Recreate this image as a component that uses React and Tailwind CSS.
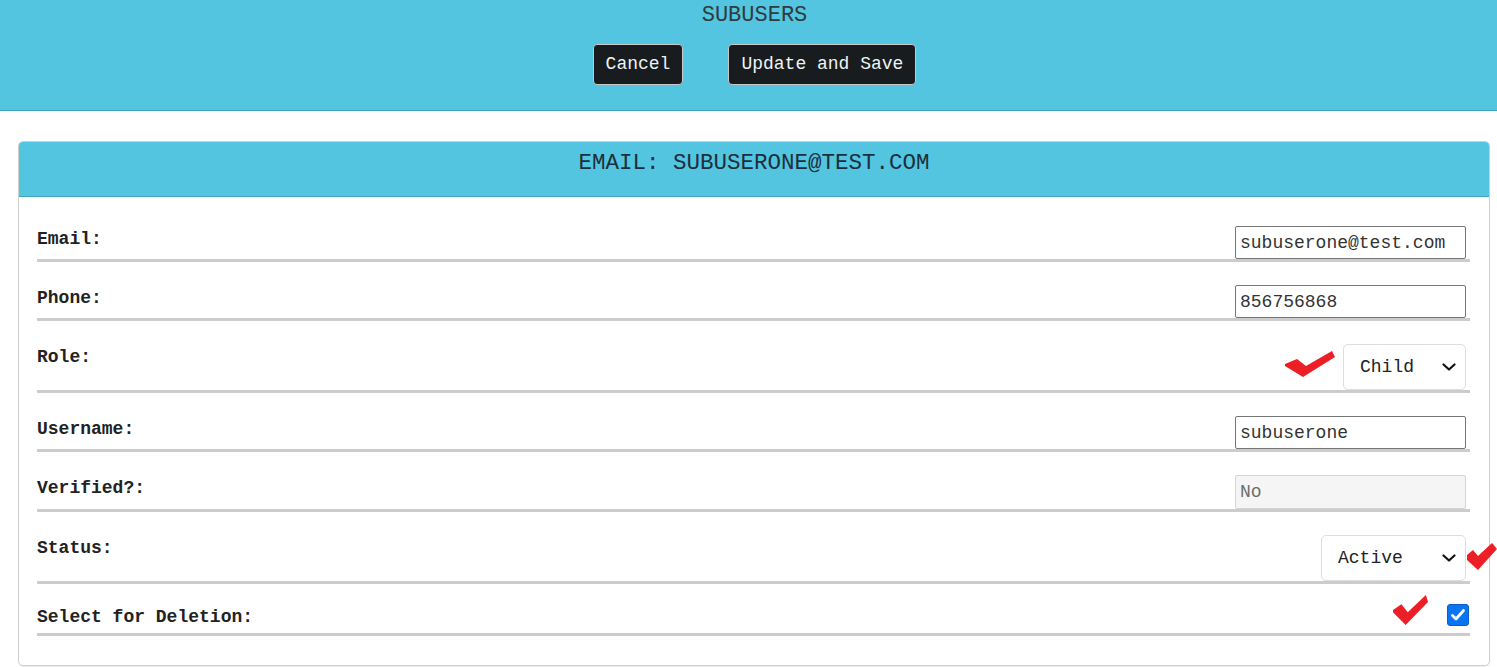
import React from "react";

const Check = ({ className }) => (
  <svg viewBox="0 0 50 26" className={className} preserveAspectRatio="none">
    <polygon points="0,13 12,8 21,15 47,0 50,6 18,26 0,15" fill="#ec1f27" />
  </svg>
);

const SmallCheck = ({ className }) => (
  <svg viewBox="0 0 30 27" className={className} preserveAspectRatio="none">
    <polygon points="0,12 6,7 11,13 25,0 30,6 11,27 0,17" fill="#ec1f27" />
  </svg>
);

const Chevron = () => (
  <svg width="14" height="8" viewBox="0 0 14 8" className="ml-auto">
    <path d="M1.5 1.5 L7 6.5 L12.5 1.5" fill="none" stroke="#111" strokeWidth="2.2" strokeLinecap="round" strokeLinejoin="round" />
  </svg>
);

const Label = ({ children }) => (
  <div className="font-bold text-[18px] leading-[26px] text-[#222]">{children}</div>
);

const Row = ({ label, children, mt = "mt-[23px]" }) => (
  <div className={`flex items-start justify-between border-b-[3px] border-[#cccccc] ${mt}`}>
    <Label>{label}</Label>
    {children}
  </div>
);

const TextInput = ({ value, disabled }) => (
  <input
    defaultValue={value}
    disabled={disabled}
    className={
      disabled
        ? "mr-[4px] w-[231px] h-[34px] px-[4px] text-[18px] border border-[#d4d4d4] bg-[#f5f5f5] text-[#6d6d6d] rounded-[2px] outline-none"
        : "mr-[4px] w-[231px] h-[33px] px-[4px] text-[18px] border border-[#767676] bg-white text-[#333] rounded-[2px] outline-none"
    }
  />
);

const Select = ({ value, w }) => (
  <div className={`${w} h-[46px] flex items-center pl-[16px] pr-[9px] border border-[#dddddd] rounded-[5px] bg-white text-[18px] text-[#222]`}>
    <span>{value}</span>
    <Chevron />
  </div>
);

export default function App() {
  return (
    <div className="w-[1497px] h-[667px] overflow-hidden bg-white font-['Liberation_Mono',monospace]">
      <div className="bg-[#53c5e0] border-b border-[#3ea7c1] h-[111px] flex flex-col items-center pl-[12px]">
        <div className="text-[22px] leading-[32px] text-[#2f3b40]">SUBUSERS</div>
        <div className="flex gap-[45px] mt-[12px]">
          <button className="h-[41px] px-[12px] bg-[#181c1e] border border-[#c8c8c8] rounded-[4px] text-[18px] text-[#eef3f5]">Cancel</button>
          <button className="h-[41px] px-[12px] bg-[#181c1e] border border-[#c8c8c8] rounded-[4px] text-[18px] text-[#eef3f5]">Update and Save</button>
        </div>
      </div>

      <div className="mt-[30px] ml-[18px] w-[1472px] border border-[#cfcfcf] rounded-[5px] shadow-[0_1px_1px_rgba(0,0,0,0.08)]">
        <div className="h-[55px] bg-[#53c5e0] border-b border-[#3ea7c1] rounded-t-[4px] flex justify-center pt-[5px]">
          <div className="text-[22.5px] leading-[32px] text-[#1d2f3a]">EMAIL: SUBUSERONE@TEST.COM</div>
        </div>
        <div className="pl-[18px] pr-[19px] pt-[6px] pb-[29px]">
          <Row label="Email:">
            <TextInput value="subuserone@test.com" />
          </Row>
          <Row label="Phone:">
            <TextInput value="856756868" />
          </Row>
          <Row label="Role:">
            <div className="flex items-center gap-[8px] mr-[4px]">
              <Check className="w-[50px] h-[26px] -mt-[6px]" />
              <Select value="Child" w="w-[123px]" />
            </div>
          </Row>
          <Row label="Username:">
            <TextInput value="subuserone" />
          </Row>
          <Row label="Verified?:">
            <TextInput value="No" disabled />
          </Row>
          <Row label="Status:">
            <div className="relative mr-[4px]">
              <Select value="Active" w="w-[145px]" />
              <SmallCheck className="absolute left-[146px] top-[8px] w-[30px] h-[27px]" />
            </div>
          </Row>
          <Row label="Select for Deletion:" mt="mt-[20px]">
            <div className="flex items-start h-[29px] mr-[1px]">
              <Check className="w-[35px] h-[30px] -mt-[9px]" />
              <div className="ml-[19px] w-[22px] h-[22px] rounded-[3px] bg-[#0a75f2] border border-[#0a5fc4] flex items-center justify-center">
                <svg width="16" height="14" viewBox="0 0 16 14">
                  <path d="M2.5 7.5 L6 11 L13.5 2.5" fill="none" stroke="white" strokeWidth="2.8" strokeLinecap="round" strokeLinejoin="round" />
                </svg>
              </div>
            </div>
          </Row>
        </div>
      </div>
    </div>
  );
}
